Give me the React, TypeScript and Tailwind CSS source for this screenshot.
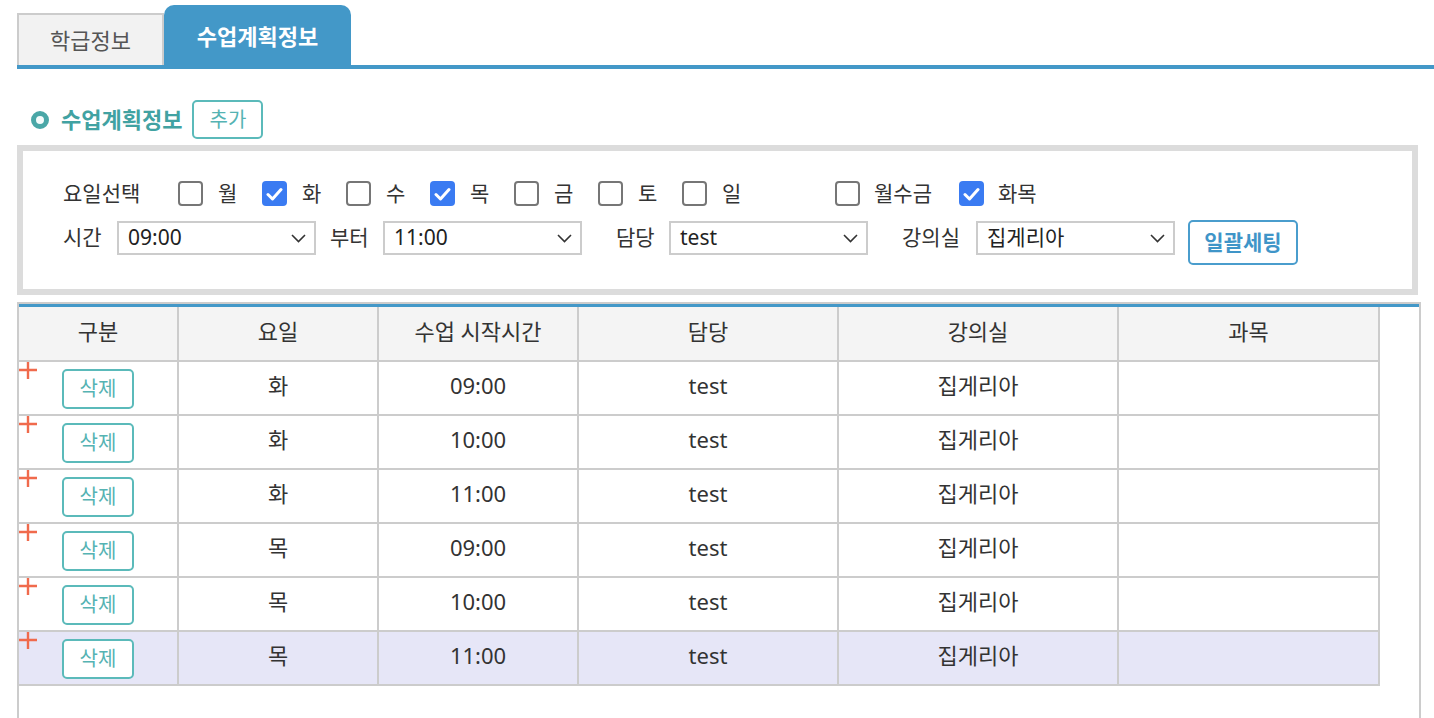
import React from "react";

const font = { fontFamily: '"Noto Sans", "Noto Sans CJK KR", sans-serif' };

const rows = [
  { day: "화", time: "09:00" },
  { day: "화", time: "10:00" },
  { day: "화", time: "11:00" },
  { day: "목", time: "09:00" },
  { day: "목", time: "10:00" },
  { day: "목", time: "11:00", active: true },
];

function Check({ checked }: { checked?: boolean }) {
  if (checked) {
    return (
      <span className="flex h-[25px] w-[25px] shrink-0 items-center justify-center rounded-[4px] bg-[#3a7bf2]">
        <svg width="17" height="14" viewBox="0 0 17 14" fill="none">
          <path d="M2 7.5 L6.5 12 L15 2.5" stroke="white" strokeWidth="3" strokeLinecap="round" strokeLinejoin="round" />
        </svg>
      </span>
    );
  }
  return <span className="block h-[25px] w-[25px] shrink-0 rounded-[4px] border-2 border-[#767676] bg-white" />;
}

function Select({ value }: { value: string }) {
  return (
    <div className="flex h-[34px] w-[199px] items-center justify-between border-2 border-[#cccccc] bg-white pl-[9px] pr-[8px] text-[21px] text-[#222]">
      <span>{value}</span>
      <svg width="15" height="9" viewBox="0 0 15 9" fill="none">
        <path d="M1 1 L7.5 7.5 L14 1" stroke="#333" strokeWidth="1.6" />
      </svg>
    </div>
  );
}

export default function App() {
  const days = [
    { d: "월" },
    { d: "화", c: true },
    { d: "수" },
    { d: "목", c: true },
    { d: "금" },
    { d: "토" },
    { d: "일" },
  ];
  return (
    <div className="min-h-[718px] bg-white pl-[17px] text-[#333]" style={font}>
      {/* tabs */}
      <div className="flex items-end pt-[5px]">
        <div className="flex h-[52px] w-[147px] items-center justify-center border-2 border-b-0 border-[#cccccc] bg-[#f2f2f2] text-[22px] text-[#555]">
          학급정보
        </div>
        <div className="flex h-[60px] w-[187px] items-center justify-center rounded-t-[10px] bg-[#4398c8] pt-[2px] text-[22px] font-bold text-white">
          수업계획정보
        </div>
      </div>
      <div className="h-[4px] bg-[#4398c8]" />

      {/* heading */}
      <div className="mt-[31px] flex items-center">
        <span className="ml-[14px] h-[18px] w-[18px] rounded-full border-[5px] border-[#4aa7a7] bg-[#f4fbfb] blur-[0.4px]" />
        <span className="ml-[12px] text-[22px] font-bold text-[#41a2a2]">수업계획정보</span>
        <button className="ml-[10px] h-[39px] w-[71px] rounded-[5px] border-2 border-[#5bbaba] bg-white text-[20px] text-[#55b3b3]">
          추가
        </button>
      </div>

      {/* filter */}
      <div className="mt-[6px] w-[1401px] border-[6px] border-[#dcdcdc] bg-white pl-[40px] pt-[30px] pb-[24px] text-[21px] text-[#333]">
        <div className="flex h-[25px] items-center">
          <span className="w-[115px]">요일선택</span>
          {days.map((x) => (
            <div key={x.d} className="flex w-[84px] items-center">
              <Check checked={x.c} />
              <span className="ml-[15px]">{x.d}</span>
            </div>
          ))}
          <div className="ml-[69px] flex w-[124px] items-center">
            <Check />
            <span className="ml-[14px]">월수금</span>
          </div>
          <div className="flex items-center">
            <Check checked />
            <span className="ml-[14px]">화목</span>
          </div>
        </div>
        <div className="mt-[15px] flex items-start">
          <span className="mt-[1px] w-[54px]">시간</span>
          <Select value="09:00" />
          <span className="ml-[14px] mt-[1px] w-[53px]">부터</span>
          <Select value="11:00" />
          <span className="ml-[34px] mt-[1px] w-[53px]">담당</span>
          <Select value="test" />
          <span className="ml-[34px] mt-[1px] w-[74px]">강의실</span>
          <Select value="집게리아" />
          <button className="ml-[13px] -mt-[1px] h-[45px] w-[110px] rounded-[5px] border-2 border-[#4a9dcd] bg-white text-[21px] font-bold text-[#3f95c8]">
            일괄세팅
          </button>
        </div>
      </div>

      {/* table */}
      <div className="mt-[7px] h-[420px] w-[1404px] border-2 border-b-0 border-[#cccccc]">
        <div className="h-[3px] bg-[#4398c8]" />
        <table className="border-collapse text-[22px] text-[#333]">
          <colgroup>
            <col className="w-[159px]" />
            <col className="w-[200px]" />
            <col className="w-[200px]" />
            <col className="w-[260px]" />
            <col className="w-[280px]" />
            <col className="w-[261px]" />
          </colgroup>
          <thead>
            <tr className="h-[54px] bg-[#f4f4f4]">
              {["구분", "요일", "수업 시작시간", "담당", "강의실", "과목"].map((h) => (
                <th key={h} className="border-b-2 border-r-2 border-[#cccccc] p-0 pb-[4px] text-center font-normal">
                  {h}
                </th>
              ))}
            </tr>
          </thead>
          <tbody>
            {rows.map((r, i) => (
              <tr key={i} className={`h-[54px] ${r.active ? "bg-[#e6e6f7]" : "bg-white"}`}>
                <td className="relative border-b-2 border-r-2 border-[#cccccc] p-0">
                  <svg className="absolute left-0 top-0" width="19" height="18" viewBox="0 0 19 18">
                    <path d="M9 0 V17 M0 8 H18" stroke="#f06a4c" strokeWidth="2.4" />
                  </svg>
                  <button className="ml-[43px] mt-[2px] h-[40px] w-[72px] rounded-[5px] border-2 border-[#5bbaba] bg-white text-[20px] text-[#55b3b3]">
                    삭제
                  </button>
                </td>
                <td className="border-b-2 border-r-2 border-[#cccccc] p-0 pb-[6px] text-center">{r.day}</td>
                <td className="border-b-2 border-r-2 border-[#cccccc] p-0 pb-[6px] text-center">{r.time}</td>
                <td className="border-b-2 border-r-2 border-[#cccccc] p-0 pb-[6px] text-center">test</td>
                <td className="border-b-2 border-r-2 border-[#cccccc] p-0 pb-[6px] text-center">집게리아</td>
                <td className="border-b-2 border-r-2 border-[#cccccc] p-0" />
              </tr>
            ))}
          </tbody>
        </table>
      </div>
    </div>
  );
}
